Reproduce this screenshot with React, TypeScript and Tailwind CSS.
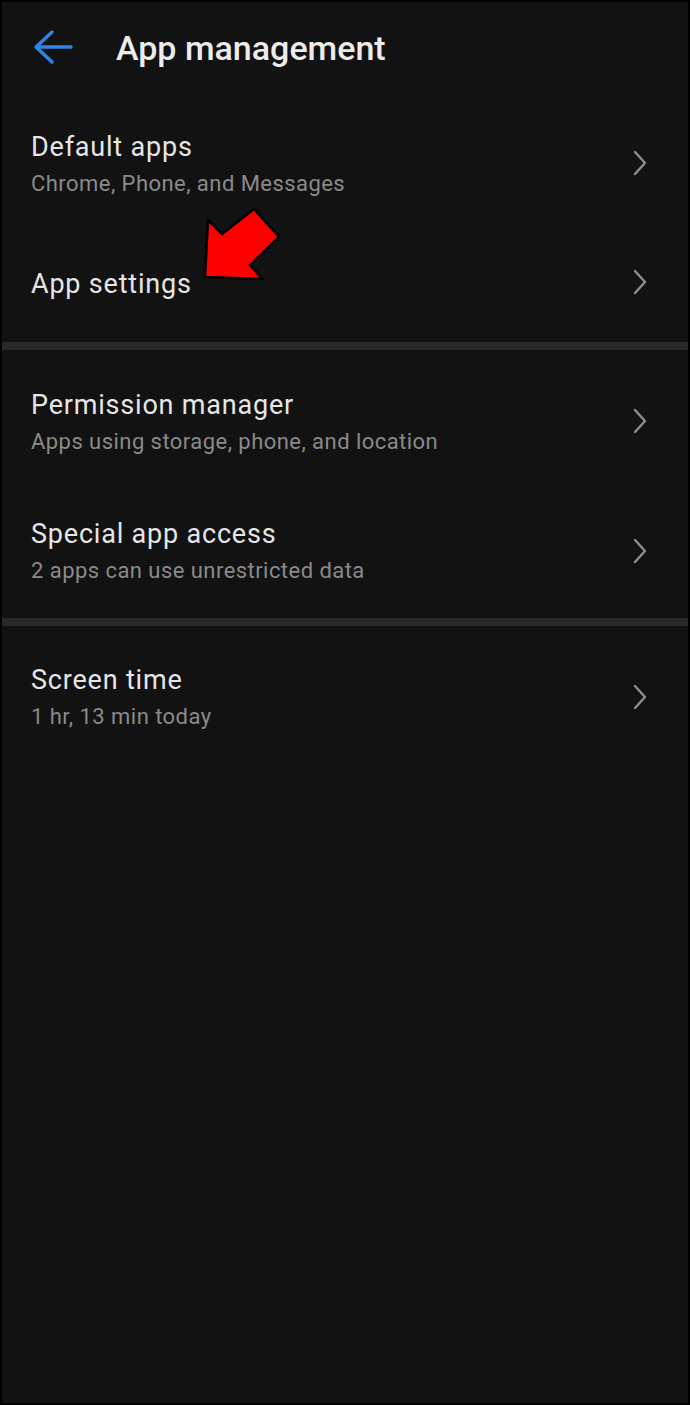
import React from "react";

const font = { fontFamily: "Roboto, 'Noto Sans', sans-serif" };

function Chevron() {
  return (
    <svg width="16" height="26" viewBox="0 0 16 26" className="mb-[5px]">
      <path d="M3 2 L13 13 L3 24" fill="none" stroke="#8e8e8e" strokeWidth="2.4" strokeLinecap="round" strokeLinejoin="round" />
    </svg>
  );
}

function Row({ title, sub, h }: { title: string; sub?: string; h: string }) {
  return (
    <div className={`flex items-center justify-between pl-[29px] pr-[40px] ${h}`}>
      <div className="flex flex-col">
        <div className="text-[27px] leading-[36px] tracking-[0.8px] text-[#e6e6e6]">{title}</div>
        {sub && <div className="text-[22px] leading-[38px] tracking-[0.45px] text-[#8a8a8a]">{sub}</div>}
      </div>
      <Chevron />
    </div>
  );
}

export default function App() {
  return (
    <div className="relative w-[690px] h-[1405px] bg-[#121212] border-2 border-black overflow-hidden" style={font}>
      <div className="flex items-center h-[92px] pl-[30px]">
        <svg width="42" height="38" viewBox="0 0 42 38">
          <path d="M39 18 H5 M20 3 L4 18 L20 33" fill="none" stroke="#2d86e6" strokeWidth="3.4" strokeLinecap="round" strokeLinejoin="round" />
        </svg>
        <div className="ml-[42px] text-[34px] font-medium text-[#ececec]">App management</div>
      </div>
      <div className="h-[6px]" />
      <Row title="Default apps" sub="Chrome, Phone, and Messages" h="h-[131px]" />
      <Row title="App settings" h="h-[106px]" />
      <div className="h-[5px]" />
      <div className="h-[8px] bg-[#2a2a2a]" />
      <div className="h-[9px]" />
      <Row title="Permission manager" sub="Apps using storage, phone, and location" h="h-[129px]" />
      <Row title="Special app access" sub="2 apps can use unrestricted data" h="h-[130px]" />
      <div className="h-[8px] bg-[#2a2a2a]" />
      <div className="h-[8px]" />
      <Row title="Screen time" sub="1 hr, 13 min today" h="h-[130px]" />

      <svg className="absolute left-0 top-0" width="690" height="400" viewBox="0 0 690 400">
        <polygon
          points="206,218 220,232 252,207 277,235 248,263 260,277 203,275"
          fill="#ff0000"
          stroke="#000"
          strokeWidth="2.5"
          strokeLinejoin="miter"
        />
      </svg>
    </div>
  );
}
